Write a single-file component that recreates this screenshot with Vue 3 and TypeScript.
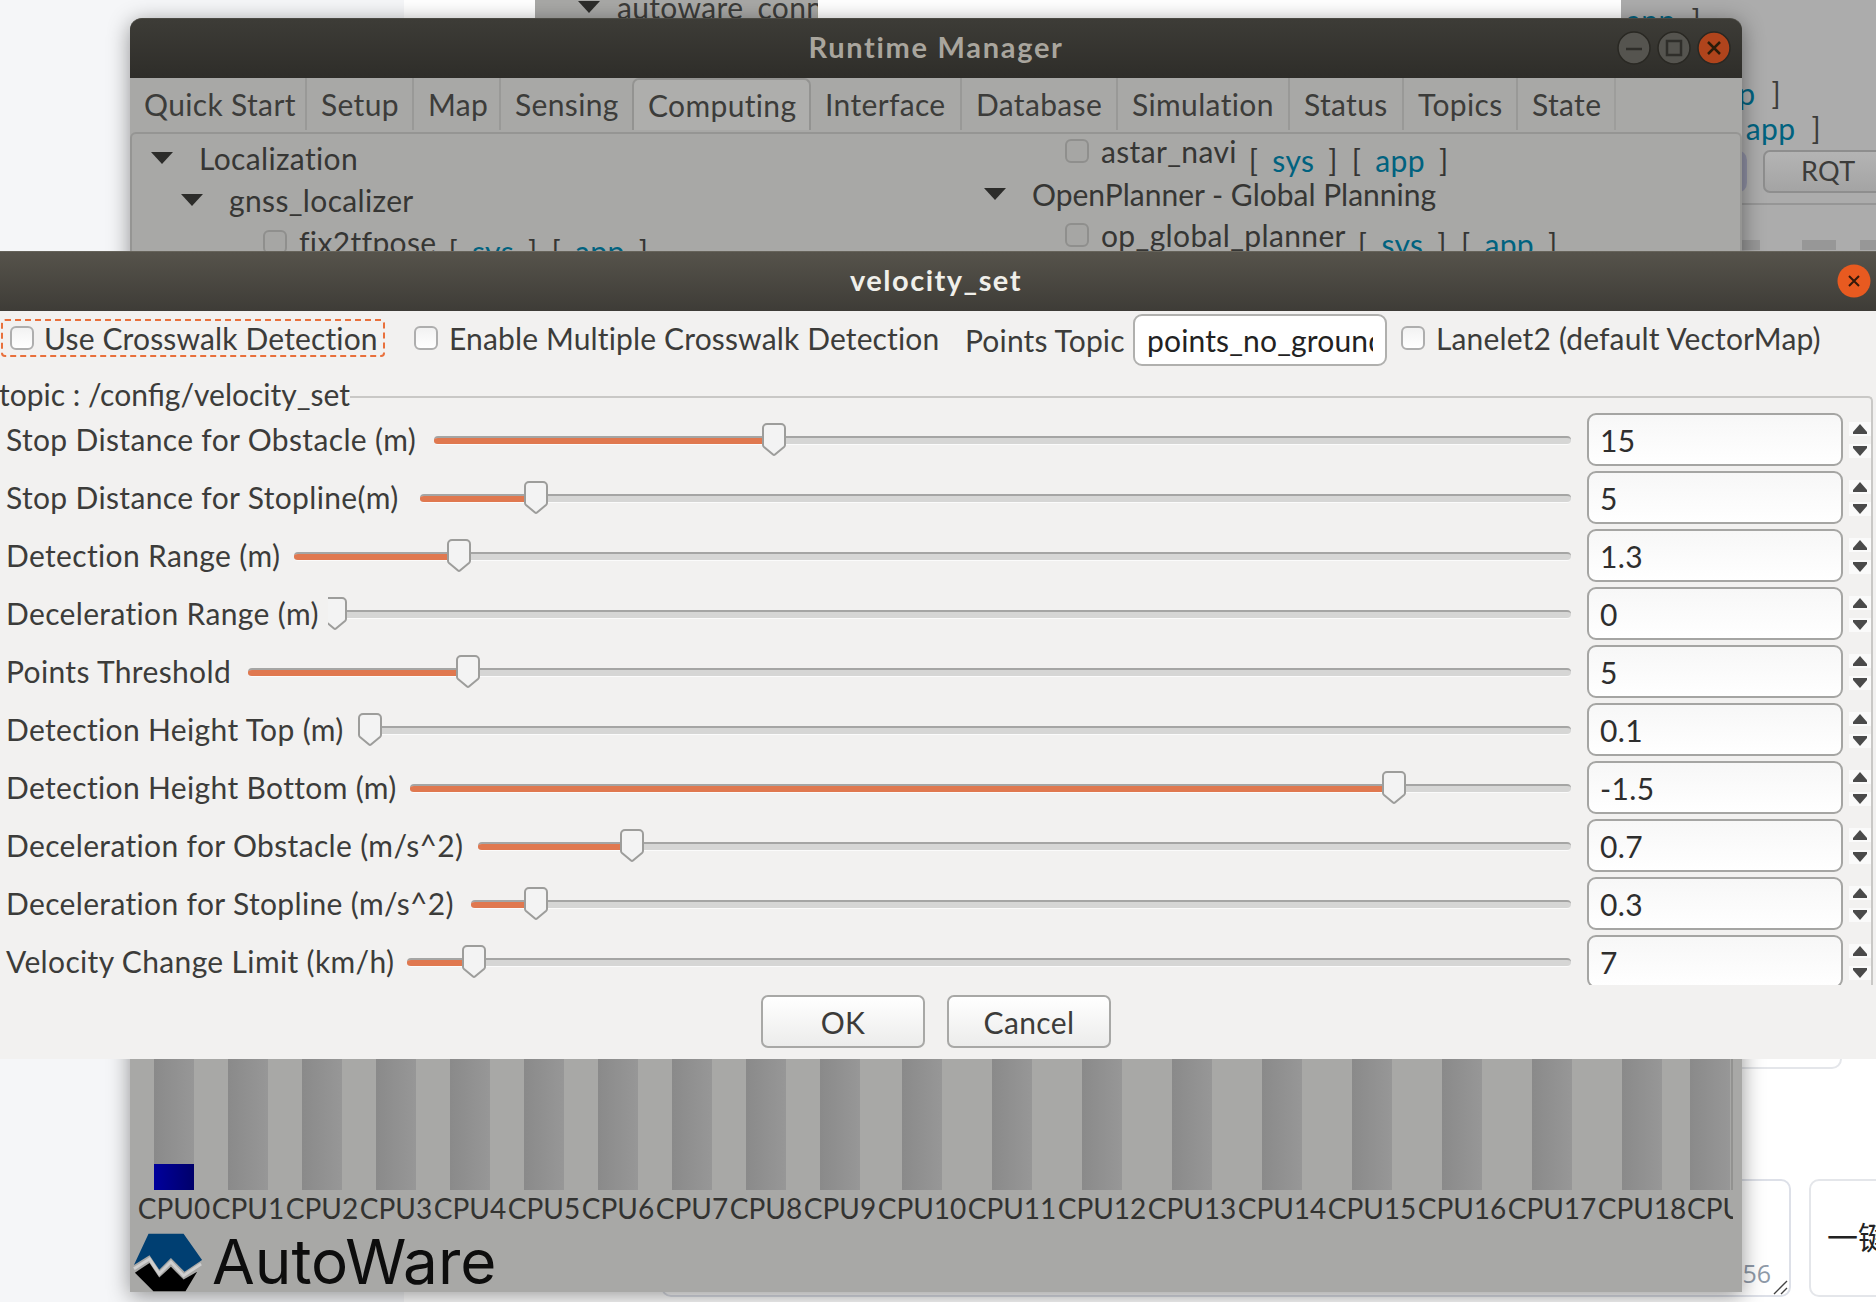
<script setup lang="ts">
interface Row { label: string; start: number; handle: number; value: string }
const rows: Row[] = [
  { label: 'Stop Distance for Obstacle (m)', start: 434, handle: 774, value: '15' },
  { label: 'Stop Distance for Stopline(m)', start: 420, handle: 536, value: '5' },
  { label: 'Detection Range (m)', start: 294, handle: 459, value: '1.3' },
  { label: 'Deceleration Range (m)', start: 328, handle: 335, value: '0' },
  { label: 'Points Threshold', start: 248, handle: 468, value: '5' },
  { label: 'Detection Height Top (m)', start: 358, handle: 370, value: '0.1' },
  { label: 'Detection Height Bottom (m)', start: 410, handle: 1394, value: '-1.5' },
  { label: 'Deceleration for Obstacle (m/s^2)', start: 478, handle: 632, value: '0.7' },
  { label: 'Deceleration for Stopline (m/s^2)', start: 471, handle: 536, value: '0.3' },
  { label: 'Velocity Change Limit (km/h)', start: 407, handle: 474, value: '7' },
]
const tabs = [
  ['Quick Start', 177], ['Setup', 107], ['Map', 87], ['Sensing', 131], ['Computing', 179],
  ['Interface', 151], ['Database', 156], ['Simulation', 172], ['Status', 114], ['Topics', 114], ['State', 98],
] as const
const cpus = Array.from({ length: 20 }, (_, i) => i)
</script>

<template>
  <div class="desk">
    <div class="bg-left"></div>
    <div class="back-top">
      <svg class="tri" viewBox="0 0 24 12"><path d="M1 0h22L12 12z" /></svg>
      <span>autoware_connector</span>
    </div>
    <div class="back-right">
      <div class="link-line l1"><b>app</b> ]</div>
      <div class="link-line l2">[ <b>app</b> ]</div>
      <div class="link-line l3">[ <b>app</b> ]</div>
      <div class="back-btns"><span class="back-blue"></span><span class="rqt">RQT</span></div>
      <div class="back-rule"></div>
      <div class="back-stripes"><i></i><i></i><i></i></div>
    </div>
    <div class="card card-a"></div>
    <div class="card card-b">
      <span class="count">256</span>
      <svg class="grip" viewBox="0 0 16 16"><path d="M1 15 14 2M8 15l6-6" /></svg>
    </div>
    <div class="card card-c">一键</div>

    <section class="win-main">
      <header class="main-title">
        <span class="main-name">Runtime Manager</span>
        <div class="wm-btns">
          <svg viewBox="0 0 34 34"><circle cx="17" cy="17" r="16" class="wm-grey" /><path d="M9 18h16" class="wm-stroke" /></svg>
          <svg viewBox="0 0 34 34"><circle cx="17" cy="17" r="16" class="wm-grey" /><rect x="10" y="10" width="14" height="14" class="wm-stroke" /></svg>
          <svg viewBox="0 0 34 34"><circle cx="17" cy="17" r="16" class="wm-red" /><path d="M11 11l12 12M23 11 11 23" class="wm-stroke dark" /></svg>
        </div>
      </header>
      <nav class="tabs">
        <div v-for="t in tabs" :key="t[0]" class="tab" :class="{ on: t[0] === 'Computing' }" :style="{ width: t[1] + 'px' }">{{ t[0] }}</div>
      </nav>
      <div class="pane">
        <div class="tree tree-l">
          <div class="node d0"><svg class="tri" viewBox="0 0 24 12"><path d="M1 0h22L12 12z" /></svg>Localization</div>
          <div class="node d1"><svg class="tri" viewBox="0 0 24 12"><path d="M1 0h22L12 12z" /></svg>gnss_localizer</div>
          <div class="node d2">
            <span class="chk dim"></span>fix2tfpose
            <span class="links"><i>[</i><b>sys</b><i>]</i><i>[</i><b>app</b><i>]</i></span>
          </div>
        </div>
        <div class="tree tree-r">
          <div class="node r2">
            <span class="chk dim"></span>astar_navi
            <span class="links"><i>[</i><b>sys</b><i>]</i><i>[</i><b>app</b><i>]</i></span>
          </div>
          <div class="node r0"><svg class="tri" viewBox="0 0 24 12"><path d="M1 0h22L12 12z" /></svg>OpenPlanner - Global Planning</div>
          <div class="node r2">
            <span class="chk dim"></span>op_global_planner
            <span class="links"><i>[</i><b>sys</b><i>]</i><i>[</i><b>app</b><i>]</i></span>
          </div>
        </div>
      </div>
      <div class="chart">
        <div v-for="i in cpus" :key="i" class="cpu" :class="{ wide: i >= 10, last: i === 19 }">
          <div class="bar"><div v-if="i === 0" class="load"></div></div>
          <div class="cpu-name">CPU{{ i }}</div>
        </div>
      </div>
      <div class="logo">
        <svg class="mark" viewBox="0 0 74 60">
          <path d="M17 1h36l19 27-18 12-14-14-12 12-10-15L2 33z" fill="#003f72" />
          <path d="M3 41 18 31l10 15 12-11 13 13 14-8-12 20H22z" fill="#000" />
          <path d="M2 37 18 27l10 15 12-12 13 14 18-12" fill="none" stroke="#cfcfcf" stroke-width="3" />
        </svg>
        <span class="logo-word">AutoWare</span>
      </div>
    </section>

    <section class="win-dialog">
      <header class="dlg-title">
        <span>velocity_set</span>
        <svg class="dlg-close" viewBox="0 0 34 34"><circle cx="17" cy="17" r="16.5" /><path d="M12 12l10 10M22 12 12 22" /></svg>
      </header>
      <div class="opts">
        <label class="opt opt-a"><span class="chk"></span>Use Crosswalk Detection</label>
        <label class="opt opt-b"><span class="chk"></span>Enable Multiple Crosswalk Detection</label>
        <span class="topic-label">Points Topic</span>
        <div class="topic-input"><span>points_no_ground</span></div>
        <label class="opt opt-c"><span class="chk"></span>Lanelet2 (default VectorMap)</label>
      </div>
      <div class="group">
        <div class="group-head">
          <span class="group-name">topic : /config/velocity_set</span>
          <span class="group-line"></span>
        </div>
        <div class="group-body">
          <div v-for="r in rows" :key="r.label" class="row">
            <div class="row-label" :style="{ width: r.start - 6 + 'px' }">{{ r.label }}</div>
            <div class="slider">
              <div class="track"><div class="fill" :style="{ width: r.handle - r.start + 'px' }"></div></div>
              <svg class="thumb" :style="{ left: r.handle - r.start - 12 + 'px' }" viewBox="0 0 24 33">
                <path d="M5 1h14a4 4 0 0 1 4 4v17a3 3 0 0 1-1 2l-9 7.500a1.500 1.500 0 0 1-2 0L2 24a3 3 0 0 1-1-2V5a4 4 0 0 1 4-4z" />
              </svg>
            </div>
            <div class="spin-input">{{ r.value }}</div>
            <div class="spin-btns">
              <span><svg viewBox="0 0 22 14"><path d="M11 2l7 8v2H4v-2z" /></svg></span>
              <span><svg viewBox="0 0 22 14"><path d="M4 2h14v2l-7 8-7-8z" /></svg></span>
            </div>
          </div>
        </div>
      </div>
      <footer class="actions">
        <button class="btn">OK</button>
        <button class="btn">Cancel</button>
      </footer>
    </section>
  </div>
</template>

<style>
html, body { margin: 0; overflow: hidden; background: #fff; }
</style>

<style scoped>
.desk {
  position: relative;
  width: 1876px;
  height: 1302px;
  overflow: hidden;
  background: #fff;
  font-family: Lato, "Noto Sans", "Noto Sans CJK SC", sans-serif;
  font-size: 30px;
  letter-spacing: 0.35px;
  color: #3c3c3a;
}
.bg-left { position: absolute; left: 0; top: 0; width: 404px; height: 1302px; background: #f5f6f8; }
.tri { width: 24px; height: 12px; flex: none; fill: #2c2c2a; }

.back-top {
  position: absolute; left: 535px; top: -5px; width: 283px; height: 23px;
  padding-left: 42px; box-sizing: border-box;
  background: #a8a8a6; display: flex; align-items: center; gap: 16px;
  white-space: nowrap; overflow: hidden;
}
.back-right {
  position: absolute; left: 1621px; top: 0; width: 255px; height: 251px;
  background: #acacac; display: flex; flex-direction: column; box-sizing: border-box;
  overflow: hidden;
}
.link-line { text-align: right; line-height: 34px; white-space: nowrap; word-spacing: 8px; }
.link-line b { color: #00627f; font-weight: 400; }
.l1 { text-align: left; padding-left: 5px; margin-top: 3px; }
.l2 { padding-right: 95px; margin-top: 39px; }
.l3 { padding-right: 55px; margin-top: 1px; }
.back-btns { display: flex; align-items: stretch; height: 43px; margin-top: 5px; padding-left: 100px; gap: 16px; }
.back-blue { width: 26px; background: #8f90a4; border-radius: 0 10px 10px 0; }
.rqt {
  flex: 1; margin-right: -20px; border: 2px solid #8e8e8e; border-radius: 7px; padding-left: 36px;
  background: linear-gradient(#b4b4b4, #a4a4a4); line-height: 38px; font-size: 27px;
}
.back-rule { height: 2px; background: #969696; margin-top: 10px; }
.back-stripes { display: flex; gap: 42px; margin-top: 35px; padding-left: 121px; }
.back-stripes i { width: 34px; height: 10px; background: #979797; flex: none; }
.back-stripes i:first-child { width: 18px; }
.back-stripes i:last-child { width: 20px; margin-left: -18px; }

.card { position: absolute; box-sizing: border-box; border: 2px solid #e4e6ea; border-radius: 10px; background: #fff; }
.card-a { left: 1000px; top: 960px; width: 842px; height: 109px; }
.card-b { left: 661px; top: 1179px; width: 1130px; height: 118px; border-color: #dde0e8; }
.count { position: absolute; right: 18px; bottom: 5px; font-size: 25px; color: #8f9aa8; font-family: "Open Sans", sans-serif; letter-spacing: 0; }
.grip { position: absolute; right: 0; bottom: 0; width: 16px; height: 16px; fill: none; stroke: #444; stroke-width: 1.400; }
.card-c {
  left: 1809px; top: 1179px; width: 120px; height: 118px; padding: 0 0 6px 16px;
  display: flex; align-items: center; font-family: "Noto Sans CJK SC", sans-serif; font-size: 31px; color: #222; letter-spacing: 0;
}

.win-main {
  position: absolute; left: 130px; top: 18px; width: 1612px; height: 1274px;
  display: flex; flex-direction: column; background: #a8a8a6;
  border-radius: 12px 12px 0 0; box-shadow: 0 4px 22px rgba(0, 0, 0, .42);
}
.main-title {
  height: 60px; flex: none; position: relative; display: flex; align-items: center; justify-content: center;
  padding-bottom: 4px;
  background: linear-gradient(#3d3c37, #2e2d29); border-radius: 12px 12px 0 0; border-top: 1px solid #4a4943; box-sizing: border-box;
}
.main-name { font-weight: 700; color: #a9a59d; font-size: 29px; letter-spacing: 1.700px; }
.wm-btns { position: absolute; right: 11px; top: 12px; display: flex; gap: 6px; }
.wm-btns svg { width: 34px; height: 34px; }
.wm-grey { fill: #55544f; stroke: #292823; stroke-width: 1.500; }
.wm-red { fill: #b0441c; stroke: #292823; stroke-width: 1.500; }
.wm-stroke { fill: none; stroke: #2f2e2a; stroke-width: 2.500; }
.wm-stroke.dark { stroke: #2a1c0a; }

.tabs { height: 52px; flex: none; display: flex; background: #a8a8a6; margin-bottom: 2px; }
.tab {
  box-sizing: border-box; padding: 4px 0 0 14px; line-height: 44px; border-right: 2px solid #999997;
  white-space: nowrap; color: #3c3c3a;
}
.tab:nth-child(4) { border-right: 0; }
.tab.on { border: 2px solid #939391; border-bottom: 0; border-radius: 7px 7px 0 0; padding-left: 14px; background: #aeaeac; line-height: 42px; }
.tab:last-child { border-right-color: #9d9d9b; }

.pane {
  height: 500px; flex: none; display: grid; grid-template-columns: 851px 1fr;
  border: 2px solid #959593; border-bottom: 0; border-radius: 6px 6px 0 0; overflow: hidden; box-sizing: border-box;
  margin-bottom: auto;
}
.tree { display: flex; flex-direction: column; }
.tree-l { padding-top: 3px; }
.tree-r { margin-top: -4px; }
.node { height: 42px; display: flex; align-items: center; white-space: nowrap; color: #363634; }
.d0 { padding-left: 18px; gap: 25px; }
.d1 { padding-left: 48px; gap: 25px; }
.d2 { padding-left: 131px; }
.r0 { padding-left: 0; gap: 25px; letter-spacing: 0; margin-top: 1px; margin-bottom: -1px; }
.r2 { padding-left: 82px; }
.links { display: flex; gap: 14px; margin-left: 12px; padding-top: 17px; }
.links i { font-style: normal; }
.links b { font-weight: 400; color: #00627f; }
.chk {
  width: 24px; height: 24px; flex: none; box-sizing: border-box; margin-right: 12px;
  border: 2px solid #aeaeae; border-radius: 6px; background: linear-gradient(#f2f2f2, #fff);
}
.chk.dim { border-color: #8f8f8d; background: #a6a6a4; }

.chart {
  position: relative; flex: none; display: flex; height: 202px; margin-left: 7px; width: 1596px; overflow: hidden;
}
.chart::after { content: ""; position: absolute; right: 0; top: 0; width: 2px; height: 160px; background: #929290; }
.cpu { width: 74px; flex: none; display: flex; flex-direction: column; }
.cpu.wide { width: 90px; }
.bar {
  height: 160px; width: 40px; margin: 0 auto; display: flex; align-items: flex-end;
  background: linear-gradient(90deg, #8a8a8a, #979797);
}
.cpu.last .bar { margin: 0 0 0 3px; }
.load { height: 26px; width: 100%; background: linear-gradient(90deg, #00009c, #00006a); }
.cpu-name { height: 42px; line-height: 36px; text-align: center; white-space: nowrap; color: #333331; font-size: 28px; letter-spacing: 0; }
.cpu.last .cpu-name { text-align: left; }
.logo { height: 60px; flex: none; display: flex; align-items: center; padding-left: 2px; gap: 8px; }
.mark { width: 72px; height: 60px; flex: none; }
.logo-word { font-family: Inter, sans-serif; font-size: 62px; color: #0d0d0d; letter-spacing: 0; line-height: 60px; }

.win-dialog {
  position: absolute; left: 0; top: 251px; width: 1876px; height: 808px;
  display: flex; flex-direction: column; background: #f2f1f0;
}
.dlg-title {
  height: 60px; flex: none; position: relative; display: flex; align-items: center; justify-content: center;
  padding-bottom: 4px;
  background: linear-gradient(#56534b, #3e3c37); border-top: 1px solid #66635a; box-sizing: border-box;
  color: #f0efea; font-weight: 700; font-size: 29px; letter-spacing: 1.500px;
}
.dlg-title > span { margin-left: -4px; }
.dlg-close { position: absolute; right: 5px; top: 12px; width: 34px; height: 34px; }
.dlg-close circle { fill: #e85a20; }
.dlg-close path { stroke: #33190a; stroke-width: 2; fill: none; }

.opts { height: 65px; flex: none; display: flex; align-items: center; padding-left: 1px; white-space: nowrap; letter-spacing: 0.15px; }
.opt { display: flex; align-items: center; box-sizing: border-box; height: 38px; margin-top: -11px; }
.opt .chk { margin-right: 11px; }
.opt-a { width: 384px; padding-left: 7px; border: 2px dashed #e9703c; border-radius: 4px; }
.opt-a .chk { margin-right: 10px; }
.opt-b { width: 551px; margin-left: 29px; }
.topic-label { width: 168px; margin-top: -7px; }
.topic-input {
  width: 254px; height: 52px; box-sizing: border-box; border: 2px solid #b0b0ae; border-radius: 9px; background: #fff;
  padding: 0 12px; display: flex; align-items: center; color: #222; flex: none; overflow: hidden; margin-top: -7px;
}
.topic-input span { display: block; overflow: hidden; }
.opt-c { margin-left: 14px; }

.group { height: 609px; flex: none; display: flex; flex-direction: column; }
.group-head { height: 37px; flex: none; display: flex; white-space: nowrap; }
.group-name { line-height: 36px; letter-spacing: 0; margin-left: -1px; }
.group-line {
  flex: 1; margin: 20px 3px 0 0; box-sizing: border-box; height: 17px;
  border-top: 2px solid #c9c8c6; border-right: 2px solid #c9c8c6; border-radius: 0 5px 0 0;
}
.group-body {
  flex: 1; min-height: 0; overflow: hidden; display: flex; flex-direction: column; gap: 5px;
  padding-left: 6px; margin-right: 3px; border-right: 2px solid #c9c8c6;
}
.row { height: 53px; flex: none; display: flex; align-items: center; }
.row-label { flex: none; white-space: nowrap; color: #3c3c3a; padding-bottom: 2px; }
.slider { position: relative; flex: 1; height: 40px; display: flex; align-items: center; overflow: hidden; margin-right: 16px; }
.track {
  width: 100%; height: 9px; box-sizing: border-box; margin-top: 2px; border-radius: 4px;
  background: #d6d6d5; border-top: 2px solid #a5a5a4; border-bottom: 1px solid #fbfbfb; overflow: hidden;
}
.fill { height: 100%; background: #e0784f; }
.thumb { position: absolute; top: 3px; width: 24px; height: 33px; }
.thumb path { fill: #f3f3f3; stroke: #9d9d9b; stroke-width: 2; }
.spin-input {
  width: 256px; height: 53px; flex: none; box-sizing: border-box; border: 2px solid #a5a5a3; border-radius: 9px;
  background: linear-gradient(#f7f7f7, #fff); padding-left: 11px; line-height: 50px; color: #2e2e2e;
}
.spin-btns { width: 22px; margin-left: 6px; flex: none; display: flex; flex-direction: column; gap: 8px; }
.spin-btns span { height: 14px; background: #fafafa; display: block; }
.spin-btns svg { width: 22px; height: 14px; display: block; fill: #4a4a4a; }

.actions { flex: 1; display: flex; justify-content: center; align-items: flex-start; gap: 22px; padding: 10px 0 0 0; margin-left: -4px; }
.btn {
  width: 164px; height: 53px; box-sizing: border-box; border: 2px solid #a8a8a6; border-radius: 7px;
  background: linear-gradient(#fff, #ececeb); font: inherit; letter-spacing: inherit; color: #3c3c3a; padding: 0;
}
</style>
